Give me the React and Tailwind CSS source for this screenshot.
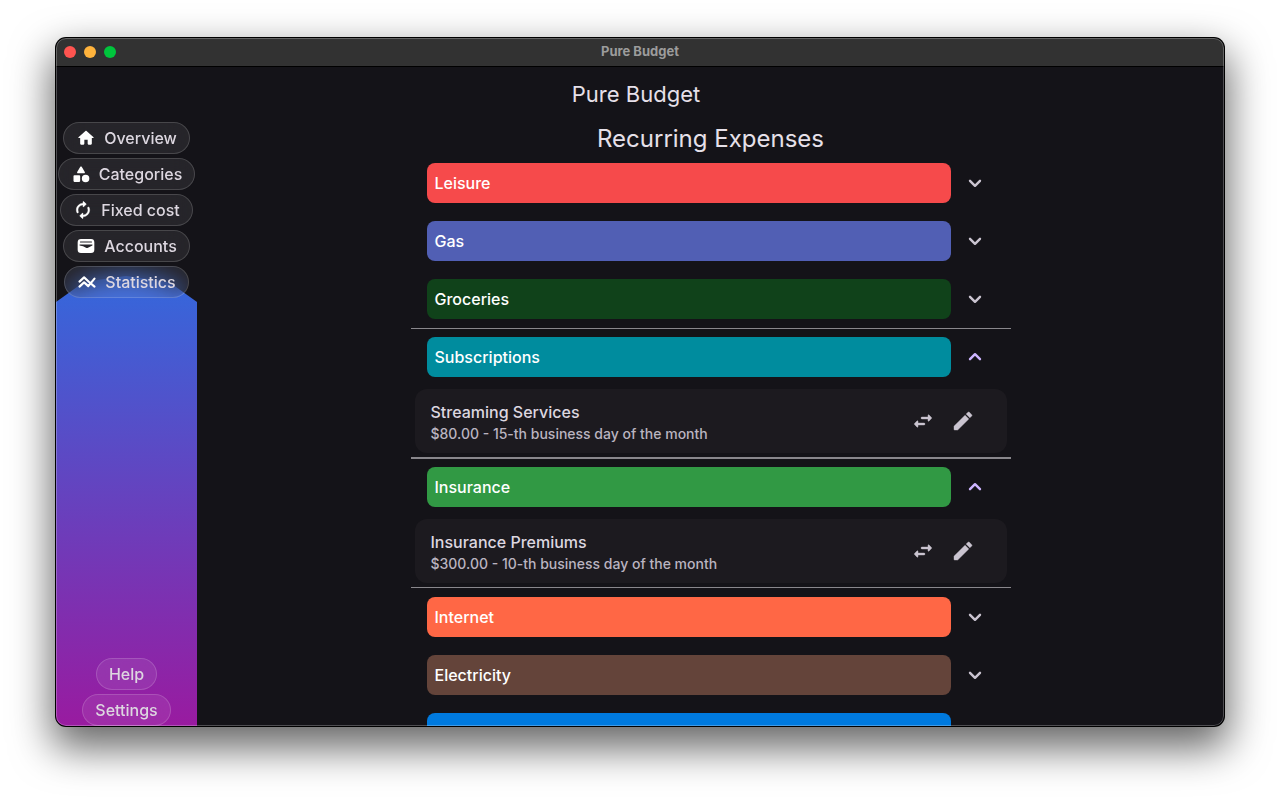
const ICONS = {
  home: "M10 19v-5h4v5c0 .55.45 1 1 1h3c.55 0 1-.45 1-1v-7h1.7c.46 0 .68-.57.33-.87L12.67 3.6c-.38-.34-.96-.34-1.34 0l-8.36 7.53c-.34.3-.13.87.33.87H5v7c0 .55.45 1 1 1h3c.55 0 1-.45 1-1z",
  category:
    "M11.15 3.4L7.43 9.48c-.41.66.07 1.52.85 1.52h7.43c.78 0 1.26-.86.85-1.52L12.85 3.4c-.39-.64-1.31-.64-1.7 0zM17.5 13a4.5 4.5 0 100 9 4.5 4.5 0 000-9zM4 21.5h6c.55 0 1-.45 1-1v-6c0-.55-.45-1-1-1H4c-.55 0-1 .45-1 1v6c0 .55.45 1 1 1z",
  renew:
    "M12 6v1.79c0 .45.54.67.85.35l2.79-2.79c.2-.2.2-.51 0-.71l-2.79-2.79c-.31-.31-.85-.09-.85.36V4c-4.42 0-8 3.58-8 8 0 1.04.2 2.04.57 2.95.27.67 1.13.85 1.64.34.27-.27.38-.68.23-1.04C6.15 13.56 6 12.79 6 12c0-3.31 2.69-6 6-6zm5.79 2.71c-.27.27-.38.69-.23 1.04.28.7.44 1.46.44 2.25 0 3.31-2.69 6-6 6v-1.79c0-.45-.54-.67-.85-.35l-2.79 2.79c-.2.2-.2.51 0 .71l2.79 2.79c.31.31.85.09.85-.35V20c4.42 0 8-3.58 8-8 0-1.04-.2-2.04-.57-2.95-.27-.67-1.13-.85-1.64-.34z",
  wallet:
    "M6 3.500h12a4 4 0 014 4v9a4 4 0 01-4 4H6a4 4 0 01-4-4v-9a4 4 0 014-4zM5.200 6.500h13.600c.5 0 .5 1.300 0 1.300H5.200c-.5 0-.5-1.300 0-1.300zM4.300 10.200v1.300l4.200.8 3.500 1.900c.8.4 1.600.4 2.400 0l5.300-2.700v-1.300z",
  swap: "M6.14 11.86l-2.78 2.79c-.19.2-.19.51 0 .71l2.78 2.79c.31.32.85.09.85-.35V16H13c.55 0 1-.45 1-1s-.45-1-1-1H7v-1.79c0-.45-.54-.67-.86-.35zm14.51-3.21l-2.78-2.79c-.31-.32-.85-.09-.85.35V8H11c-.55 0-1 .45-1 1s.45 1 1 1h6v1.79c0 .45.54.67.85.35l2.78-2.79c.2-.19.2-.51.02-.7z",
  edit: "M3 17.46v3.04c0 .28.22.5.5.5h3.04c.13 0 .26-.05.35-.15L17.81 9.94l-3.75-3.75L3.15 17.1c-.1.1-.15.22-.15.36zM20.71 7.04a1 1 0 000-1.41l-2.34-2.34a1 1 0 00-1.41 0l-1.83 1.83 3.75 3.75 1.83-1.83z",
};

const OUTLINED = { renew: 0.5, swap: 0.4, edit: 0.4 };

function Icon({ name, className }) {
  if (name === "chart") {
    return (
      <svg viewBox="0 0 24 24" className={className} fill="none" stroke="currentColor" strokeWidth="2.6" strokeLinecap="round" strokeLinejoin="round" aria-hidden="true">
        <path d="M3 11.500L8.500 6.500l6 5.500L21 17.500" />
        <path d="M3 17.500l5.500-5 5 4.500L21 8" />
      </svg>
    );
  }
  return (
    <svg viewBox="0 0 24 24" className={className} fill="currentColor" fillRule="evenodd" stroke="currentColor" strokeWidth={OUTLINED[name] ?? 0} aria-hidden="true">
      <path d={ICONS[name]} />
    </svg>
  );
}

const NAV = [
  { label: "Overview", icon: "home" },
  { label: "Categories", icon: "category" },
  { label: "Fixed cost", icon: "renew" },
  { label: "Accounts", icon: "wallet" },
  { label: "Statistics", icon: "chart" },
];

const SECTIONS = [
  { name: "Leisure", color: "bg-[#f64a4b]" },
  { name: "Gas", color: "bg-[#515fb4]" },
  { name: "Groceries", color: "bg-[#10421a]" },
  {
    name: "Subscriptions",
    color: "bg-[#008c9e]",
    item: { title: "Streaming Services", detail: "$80.00 - 15-th business day of the month" },
  },
  {
    name: "Insurance",
    color: "bg-[#319944]",
    item: { title: "Insurance Premiums", detail: "$300.00 - 10-th business day of the month" },
  },
  { name: "Internet", color: "bg-[#ff6745]" },
  { name: "Electricity", color: "bg-[#64443a]" },
];

function NavButton({ label, icon }) {
  return (
    <button
      type="button"
      className="flex h-8 items-center gap-2 rounded-full border border-white/16 bg-white/8 px-3 text-base font-medium text-[#ddd7e0] backdrop-blur-md"
    >
      {icon && <Icon name={icon} className="size-5 shrink-0 text-white" />}
      <span className="whitespace-nowrap">{label}</span>
    </button>
  );
}

function Section({ name, color, item }) {
  return (
    <section className={`border-y ${item ? "border-[#89878c]" : "border-transparent"}`}>
      <div className="flex items-center gap-3 py-2 pr-6 pl-4">
        <h3 className={`flex h-10 flex-1 items-center rounded-lg px-2 text-base font-medium text-white ${color}`}>{name}</h3>
        <button
          type="button"
          aria-label={`Toggle ${name}`}
          aria-expanded={Boolean(item)}
          className={item ? "text-[#cdb5ff]" : "text-[#cac4d0]"}
        >
          <svg viewBox="0 0 24 24" className="size-6" fill="none" stroke="currentColor" strokeWidth="2.4" strokeLinecap="round" strokeLinejoin="round" aria-hidden="true">
            <path d={item ? "M7 14.200l5-5 5 5" : "M7 9.800l5 5 5-5"} />
          </svg>
        </button>
      </div>
      {item && (
        <div className="m-1 flex h-16 items-center rounded-xl bg-[#1c1a1f] pr-6 pl-4">
          <div className="flex-1 pt-0.5">
            <p className="text-base font-medium text-[#ddd7e0]">{item.title}</p>
            <p className="text-sm font-medium text-[#bab4c0]">{item.detail}</p>
          </div>
          <button type="button" aria-label="Transfer" className="grid size-10 place-items-center text-[#cac4d0]">
            <Icon name="swap" className="size-6" />
          </button>
          <button type="button" aria-label="Edit" className="grid size-10 place-items-center text-[#cac4d0]">
            <Icon name="edit" className="size-6" />
          </button>
        </div>
      )}
    </section>
  );
}

export default function App() {
  return (
    <div className="flex h-screen flex-col bg-white px-14 pt-[38px] pb-[74px] font-['Inter',sans-serif] text-[#e6e0e9]">
      <div className="relative flex min-h-0 flex-1 flex-col overflow-hidden rounded-[10px] bg-[#141318] shadow-[0_0_0_1px_#000,0_18px_40px_4px_rgba(0,0,0,0.6)]">
        <div className="flex h-[29px] shrink-0 items-center border-b border-black bg-[#323232] px-2">
          <div className="flex flex-1 gap-2">
            <span className="size-3 rounded-full bg-[#ff5450]" />
            <span className="size-3 rounded-full bg-[#ffb33c]" />
            <span className="size-3 rounded-full bg-[#00c53c]" />
          </div>
          <span className="text-[13px] font-bold text-[#9c9c9c]">Pure Budget</span>
          <div className="flex-1" />
        </div>

        <header className="flex h-[55px] shrink-0 items-center justify-center pr-2">
          <h1 className="text-[22px]">Pure Budget</h1>
        </header>

        <div className="flex min-h-0 flex-1">
          <aside className="relative flex w-[141px] shrink-0 flex-col items-center justify-between">
            <div className="absolute inset-x-0 top-[154px] bottom-0 bg-linear-to-b/srgb from-[#3468dc] to-[#991ba0] [clip-path:polygon(0_26px,28px_6px,70px_0,113px_6px,100%_26px,100%_100%,0_100%)]" />
            <nav className="flex flex-col items-center gap-1">
              {NAV.map((entry) => (
                <NavButton key={entry.label} {...entry} />
              ))}
            </nav>
            <div className="flex flex-col items-center gap-1">
              <NavButton label="Help" />
              <NavButton label="Settings" />
            </div>
          </aside>

          <main className="flex min-w-0 flex-1 flex-col items-center overflow-y-auto [scrollbar-width:none]">
            <h2 className="flex h-8 shrink-0 items-center pt-0.5 text-2xl">Recurring Expenses</h2>
            <div className="w-full max-w-[600px]">
              {SECTIONS.map((section) => (
                <Section key={section.name} {...section} />
              ))}
              <div className="pt-[9px] pr-[60px] pl-4">
                <div className="h-10 rounded-lg bg-[#007adf]" />
              </div>
            </div>
          </main>
        </div>
        <div className="pointer-events-none absolute inset-0 rounded-[10px] border border-white/25" />
      </div>
    </div>
  );
}
